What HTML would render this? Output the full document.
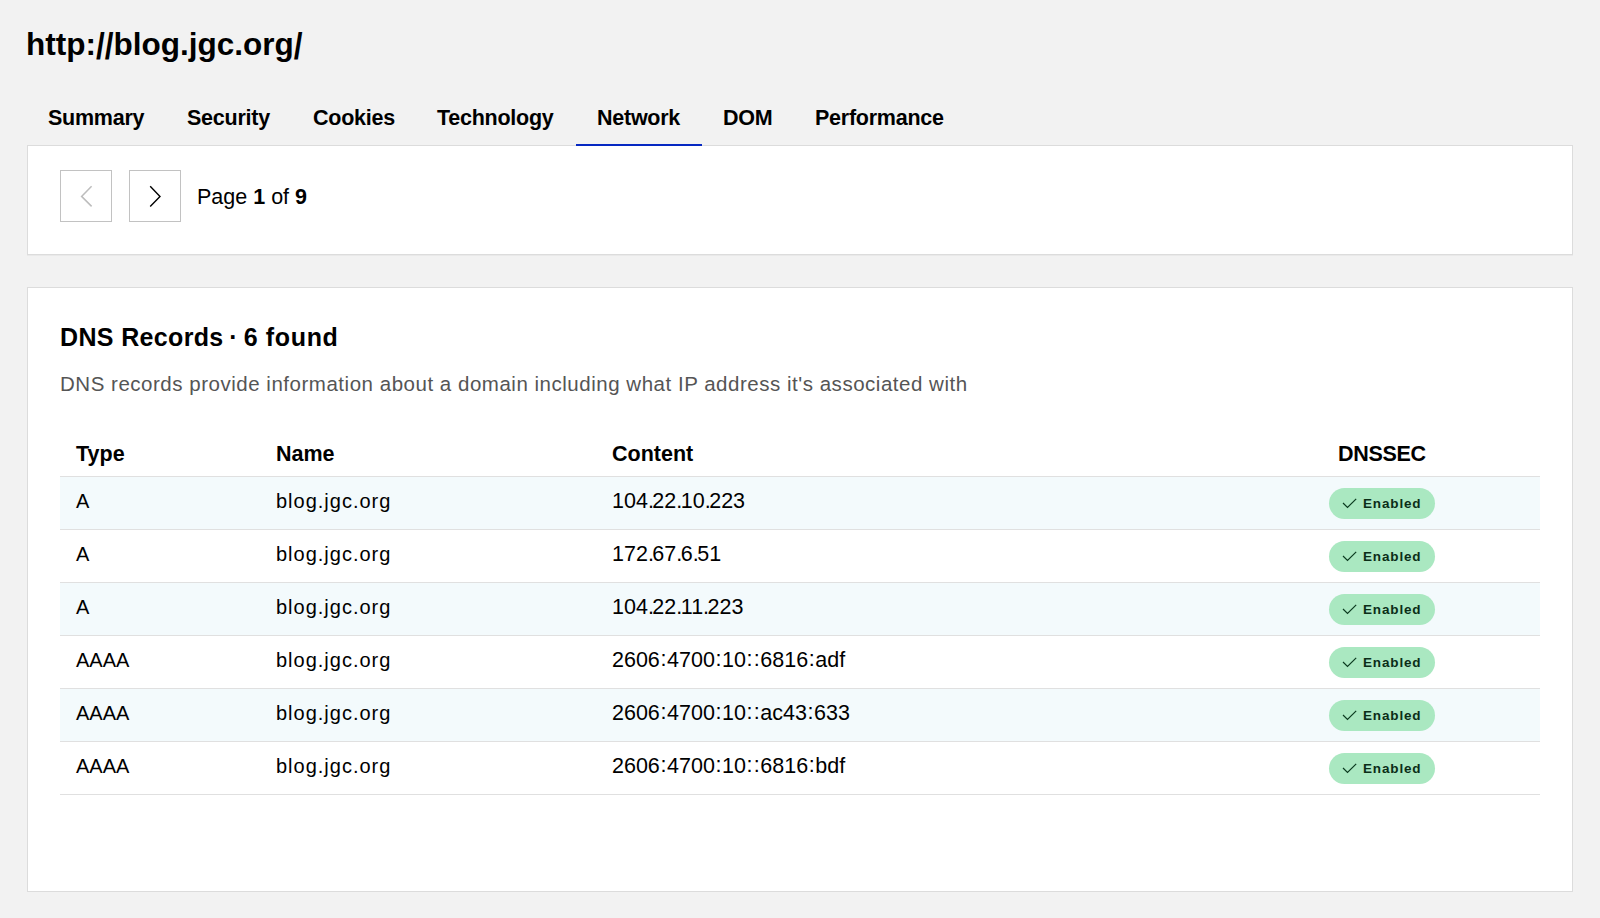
<!DOCTYPE html>
<html>
<head>
<meta charset="utf-8">
<style>
*{box-sizing:border-box;margin:0;padding:0}
html,body{width:1600px;height:918px;overflow:hidden;background:#f2f2f2;font-family:"Liberation Sans",sans-serif;color:#000}
.abs{position:absolute}
.sl{display:inline-block;transform-origin:50% 20%;transform:scaleY(1.2)}
#title{left:26px;top:26px;font-size:31.5px;font-weight:bold;line-height:36px;white-space:nowrap}
.tab{position:absolute;top:105.5px;font-size:21.5px;letter-spacing:-0.25px;font-weight:bold;line-height:24px;white-space:nowrap}
#underline{left:576px;top:144px;width:126px;height:2px;background:#0628c2;z-index:2}
.box{position:absolute;left:27px;width:1546px;background:#fff;border:1px solid #dcdcdc}
#box1{top:145px;height:110px;box-shadow:0 1px 0 #e9e9e9}
#box2{top:287px;height:605px}
.btn{position:absolute;top:170px;width:52px;height:52px;border:1px solid #c2c2c2;background:#fff}
.btn svg{position:absolute;left:0;top:0}
#page{left:197px;top:185px;font-size:21.5px;line-height:24px;white-space:nowrap}
#h2{left:60px;top:323px;font-size:25px;font-weight:bold;line-height:28px;white-space:nowrap;letter-spacing:0.35px}
#desc{left:60px;top:372px;font-size:20.5px;letter-spacing:0.52px;line-height:24px;color:#555;white-space:nowrap}
.th{position:absolute;top:441.5px;font-size:21.5px;font-weight:bold;line-height:24px;white-space:nowrap}
.row{position:absolute;left:60px;width:1480px;height:54px;border-top:1px solid #e0e0e0;border-bottom:1px solid #e0e0e0}
.row.alt{background:#f3fafc}
.nm{letter-spacing:1px}
.c{display:inline-block;padding:0 0.6px;position:relative;top:-1px}
.d{letter-spacing:-1.5px}
.cell.ct{font-size:21.5px;letter-spacing:0px}
.cell{position:absolute;font-size:20px;line-height:24px;white-space:nowrap}
.badge{position:absolute;left:1269px;top:11px;width:106px;height:31px;border-radius:16px;background:#aae8c1}
.badge svg{position:absolute;left:0;top:0}
.badge span{position:absolute;left:34px;top:8px;font-size:13.5px;font-weight:bold;line-height:15px;letter-spacing:0.85px;color:#0b2e18}
</style>
</head>
<body>
<div id="title" class="abs">http:<span class="sl">/</span><span class="sl">/</span>blog.jgc.org<span class="sl">/</span></div>

<div class="tab" style="left:48px">Summary</div>
<div class="tab" style="left:187px">Security</div>
<div class="tab" style="left:313px">Cookies</div>
<div class="tab" style="left:437px">Technology</div>
<div class="tab" style="left:597px">Network</div>
<div class="tab" style="left:723px">DOM</div>
<div class="tab" style="left:815px">Performance</div>

<div id="box1" class="box"></div>
<div id="underline" class="abs"></div>

<div class="btn" style="left:60px"><svg width="52" height="52" viewBox="0 0 52 52"><polyline points="30.6,15.3 20.6,25.4 30.6,35.4" fill="none" stroke="#bdbdbd" stroke-width="1.5"/></svg></div>
<div class="btn" style="left:129px"><svg width="52" height="52" viewBox="0 0 52 52"><polyline points="20.2,15.3 30,25.4 20.2,35.4" fill="none" stroke="#000" stroke-width="1.4"/></svg></div>
<div id="page" class="abs">Page <b>1</b> of <b>9</b></div>

<div id="box2" class="box"></div>
<div id="h2" class="abs">DNS Records<span style="word-spacing:-1.6px"> · </span><span style="letter-spacing:0.65px">6 found</span></div>
<div id="desc" class="abs">DNS records provide information about a domain including what IP address it's associated with</div>

<div class="th" style="left:76px">Type</div>
<div class="th" style="left:276px">Name</div>
<div class="th" style="left:612px">Content</div>
<div class="th" style="left:1338px;letter-spacing:-0.3px">DNSSEC</div>

<div class="row alt" style="top:476px"><div class="cell" style="left:16px;top:12px">A</div><div class="cell nm" style="left:216px;top:12px">blog.jgc.org</div><div class="cell ct" style="left:552px;top:12px">104<span class="d">.</span>22<span class="d">.</span>10<span class="d">.</span>223</div><div class="badge"><svg width="40" height="31"><polyline points="14,15 18.5,19.5 27.2,10.8" fill="none" stroke="#0c3b20" stroke-width="1.2"/></svg><span>Enabled</span></div></div>
<div class="row" style="top:529px"><div class="cell" style="left:16px;top:12px">A</div><div class="cell nm" style="left:216px;top:12px">blog.jgc.org</div><div class="cell ct" style="left:552px;top:12px">172<span class="d">.</span>67<span class="d">.</span>6<span class="d">.</span>51</div><div class="badge"><svg width="40" height="31"><polyline points="14,15 18.5,19.5 27.2,10.8" fill="none" stroke="#0c3b20" stroke-width="1.2"/></svg><span>Enabled</span></div></div>
<div class="row alt" style="top:582px"><div class="cell" style="left:16px;top:12px">A</div><div class="cell nm" style="left:216px;top:12px">blog.jgc.org</div><div class="cell ct" style="left:552px;top:12px">104<span class="d">.</span>22<span class="d">.</span>11<span class="d">.</span>223</div><div class="badge"><svg width="40" height="31"><polyline points="14,15 18.5,19.5 27.2,10.8" fill="none" stroke="#0c3b20" stroke-width="1.2"/></svg><span>Enabled</span></div></div>
<div class="row" style="top:635px"><div class="cell" style="left:16px;top:12px">AAAA</div><div class="cell nm" style="left:216px;top:12px">blog.jgc.org</div><div class="cell ct" style="left:552px;top:12px">2606<span class="c">:</span>4700<span class="c">:</span>10<span class="c">:</span><span class="c">:</span>6816<span class="c">:</span>adf</div><div class="badge"><svg width="40" height="31"><polyline points="14,15 18.5,19.5 27.2,10.8" fill="none" stroke="#0c3b20" stroke-width="1.2"/></svg><span>Enabled</span></div></div>
<div class="row alt" style="top:688px"><div class="cell" style="left:16px;top:12px">AAAA</div><div class="cell nm" style="left:216px;top:12px">blog.jgc.org</div><div class="cell ct" style="left:552px;top:12px">2606<span class="c">:</span>4700<span class="c">:</span>10<span class="c">:</span><span class="c">:</span>ac43<span class="c">:</span>633</div><div class="badge"><svg width="40" height="31"><polyline points="14,15 18.5,19.5 27.2,10.8" fill="none" stroke="#0c3b20" stroke-width="1.2"/></svg><span>Enabled</span></div></div>
<div class="row" style="top:741px"><div class="cell" style="left:16px;top:12px">AAAA</div><div class="cell nm" style="left:216px;top:12px">blog.jgc.org</div><div class="cell ct" style="left:552px;top:12px">2606<span class="c">:</span>4700<span class="c">:</span>10<span class="c">:</span><span class="c">:</span>6816<span class="c">:</span>bdf</div><div class="badge"><svg width="40" height="31"><polyline points="14,15 18.5,19.5 27.2,10.8" fill="none" stroke="#0c3b20" stroke-width="1.2"/></svg><span>Enabled</span></div></div>
</body>
</html>
